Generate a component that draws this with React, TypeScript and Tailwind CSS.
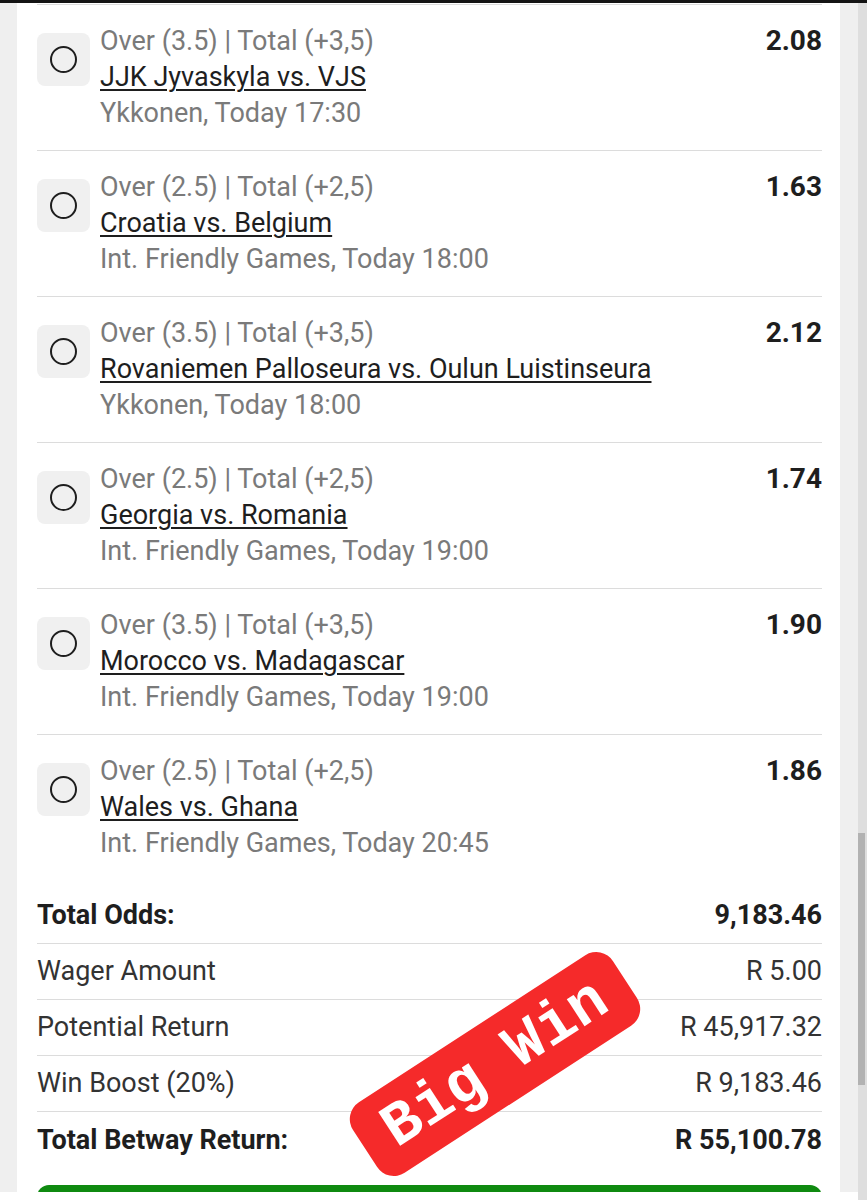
import React from "react";

type Bet = { market: string; match: string; info: string; odds: string };

const bets: Bet[] = [
  { market: "Over (3.5) | Total (+3,5)", match: "JJK Jyvaskyla vs. VJS", info: "Ykkonen, Today 17:30", odds: "2.08" },
  { market: "Over (2.5) | Total (+2,5)", match: "Croatia vs. Belgium", info: "Int. Friendly Games, Today 18:00", odds: "1.63" },
  { market: "Over (3.5) | Total (+3,5)", match: "Rovaniemen Palloseura vs. Oulun Luistinseura", info: "Ykkonen, Today 18:00", odds: "2.12" },
  { market: "Over (2.5) | Total (+2,5)", match: "Georgia vs. Romania", info: "Int. Friendly Games, Today 19:00", odds: "1.74" },
  { market: "Over (3.5) | Total (+3,5)", match: "Morocco vs. Madagascar", info: "Int. Friendly Games, Today 19:00", odds: "1.90" },
  { market: "Over (2.5) | Total (+2,5)", match: "Wales vs. Ghana", info: "Int. Friendly Games, Today 20:45", odds: "1.86" },
];

function BetRow({ bet, last }: { bet: Bet; last: boolean }) {
  return (
    <div className={`flex pt-[18px] pb-[19px] ${last ? "" : "border-b border-[#dcdcdc]"}`}>
      <div className="mt-[10px] flex h-[53px] w-[53px] shrink-0 items-center justify-center rounded-[8px] bg-[#f0f0f0]">
        <div className="h-[27px] w-[27px] rounded-full border-[2.5px] border-[#1e1e1e]" />
      </div>
      <div className="ml-[10px] flex-1 text-[27px] leading-[36px]">
        <div className="text-[#7a7a7a]">{bet.market}</div>
        <div className="text-[#1e1e1e] underline decoration-[2px] underline-offset-[3px]">{bet.match}</div>
        <div className="text-[#7a7a7a]">{bet.info}</div>
      </div>
      <div className="text-[28px] font-bold leading-[36px] text-[#1e1e1e]">{bet.odds}</div>
    </div>
  );
}

function TotalRow({ label, value, bold, last }: { label: string; value: string; bold?: boolean; last?: boolean }) {
  return (
    <div
      className={`flex h-[56px] items-center justify-between text-[27px] ${bold ? "font-bold text-[#1e1e1e]" : "text-[#333333]"} ${last ? "" : "border-b border-[#dcdcdc]"}`}
    >
      <span>{label}</span>
      <span>{value}</span>
    </div>
  );
}

export default function App() {
  return (
    <div className="relative flex h-[1200px] w-[867px] flex-col overflow-hidden bg-[#efefef]" style={{ fontFamily: "Roboto, 'Noto Sans', sans-serif" }}>
      <div className="h-[3px] w-full shrink-0 bg-[#141414]" />
      <div className="flex min-h-0 flex-1">
        <div className="w-[17px] shrink-0 bg-[#efefef]" />
        <div className="relative w-[823px] shrink-0 overflow-hidden bg-white pl-[20px] pr-[18px]">
          <div className="mt-[1px] border-t border-[#dcdcdc]">
            {bets.map((b, i) => (
              <BetRow key={i} bet={b} last={i === bets.length - 1} />
            ))}
          </div>
          <div className="relative mt-[8px]">
            <TotalRow label="Total Odds:" value="9,183.46" bold />
            <TotalRow label="Wager Amount" value="R 5.00" />
            <TotalRow label="Potential Return" value="R 45,917.32" />
            <TotalRow label="Win Boost (20%)" value="R 9,183.46" />
            <TotalRow label="Total Betway Return:" value="R 55,100.78" bold last />
            <div className="pointer-events-none absolute left-[303px] top-[134px] flex h-[84px] w-[310px] -rotate-[33deg] items-center justify-center rounded-[20px] bg-[#f52a2a]">
              <span
                className="text-[61px] font-bold leading-none text-white"
                style={{ fontFamily: "'Liberation Mono', 'Courier New', monospace" }}
              >
                Big Win
              </span>
            </div>
          </div>
          <div className="mt-[17px] h-[40px] rounded-t-[12px] bg-[#0f8a10]" />
        </div>
        <div className="w-[18px] shrink-0 bg-[#efefef]" />
        <div className="relative w-[9px] shrink-0 bg-[#dedede]">
          <div className="absolute left-0 top-[830px] h-[252px] w-[7px] bg-[#b2b2b2]" />
        </div>
      </div>
      <div className="absolute bottom-0 left-0 h-[8px] w-[858px] bg-white" />
    </div>
  );
}
